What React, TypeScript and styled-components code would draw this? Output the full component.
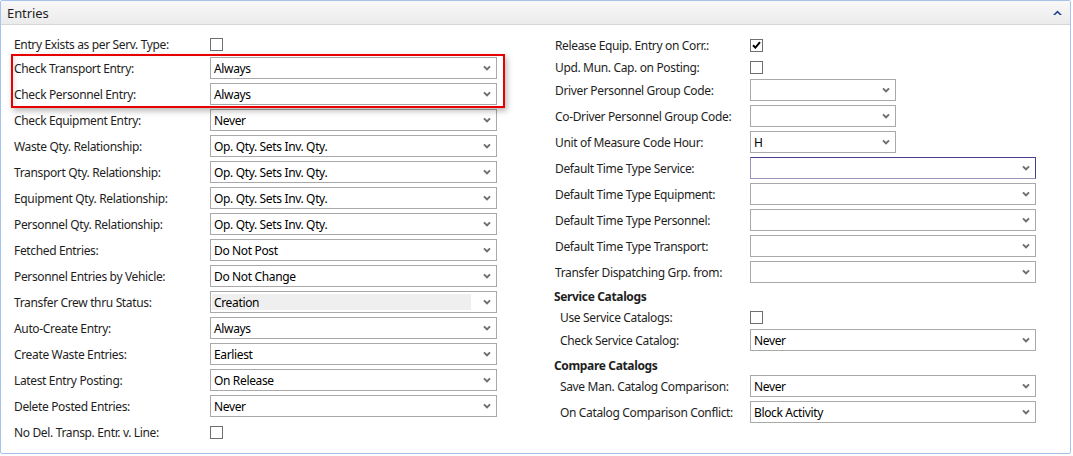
import React from 'react';
import styled, { createGlobalStyle } from 'styled-components';

const Global = createGlobalStyle`
  html, body { margin: 0; padding: 0; background: #ffffff; }
  body { font-family: "Segoe UI", "Noto Sans", "Open Sans", sans-serif; color: #1e1e1e; }
  * { box-sizing: border-box; }
`;

const Panel = styled.section`
  width: 1071px;
  height: 454px;
  border: 1px solid #a8c3ea;
  border-radius: 2px;
  display: flex;
  flex-direction: column;
  background: #fff;
`;

const Header = styled.header`
  height: 24px;
  flex: none;
  border-bottom: 1px solid #d6d6d6;
  background: linear-gradient(#f8f8f8, #ebebeb);
  display: flex;
  align-items: center;
  justify-content: space-between;
  padding: 0 8px 0 6px;
`;

const Title = styled.h2`
  margin: 0;
  font-size: 13px;
  font-weight: 400;
  color: #1e1e1e;
  letter-spacing: -0.1px;
`;

const CollapseBtn = styled.span`
  display: flex;
  width: 9px;
  height: 6px;
  color: #1f3e8e;
`;

const Body = styled.div`
  flex: 1;
  display: grid;
  grid-template-columns: 541px 1fr;
`;

const Column = styled.div<{ $top: number }>`
  padding: ${(p) => p.$top}px 0 0 13px;
  display: flex;
  flex-direction: column;
`;

const Row = styled.div<{ $h: number; $indent?: number }>`
  height: ${(p) => p.$h}px;
  display: flex;
  align-items: center;
  padding-left: ${(p) => p.$indent || 0}px;
`;

const Label = styled.span<{ $w: number }>`
  width: ${(p) => p.$w}px;
  flex: none;
  font-size: 12px;
  letter-spacing: -0.35px;
  white-space: nowrap;
  color: #1e1e1e;
`;

const SectionTitle = styled.div<{ $h: number; $pt?: number }>`
  height: ${(p) => p.$h}px;
  padding-top: ${(p) => p.$pt || 0}px;
  display: flex;
  align-items: center;
  font-size: 12px;
  letter-spacing: -0.35px;
  font-weight: 700;
  color: #1e1e1e;
  margin-left: -1px;
`;

const Box = styled.span`
  width: 13px;
  height: 13px;
  border: 1px solid #6f6f6f;
  background: #fff;
  display: flex;
  align-items: center;
  justify-content: center;
`;

const Combo = styled.div<{ $w: number; $focus?: boolean }>`
  width: ${(p) => p.$w}px;
  height: 22px;
  border: 1px solid #a9a9a9;
  border-color: ${(p) => (p.$focus ? '#4b3d8c #4b3d8c #9893bd #9893bd' : '#a9a9a9')};
  background: #fff;
  display: flex;
  align-items: center;
  padding: 0 5px 0 1px;
`;

const Value = styled.span<{ $shaded?: boolean }>`
  flex: 1;
  height: 16px;
  margin-right: 12px;
  padding-left: 2px;
  display: flex;
  align-items: center;
  font-size: 12px;
  letter-spacing: -0.35px;
  color: #000;
  background: ${(p) => (p.$shaded ? '#efefef' : 'transparent')};
  white-space: nowrap;
`;

const Chevron = styled.svg`
  width: 8px;
  height: 6px;
  flex: none;
`;

const Highlight = styled.div`
  position: relative;
  display: flex;
  flex-direction: column;
  &::after {
    content: '';
    position: absolute;
    top: -1px;
    bottom: -1px;
    left: -3px;
    right: 37px;
    border: 2px solid #e60000;
    box-shadow: 2px 3px 6px rgba(0, 0, 0, 0.28), inset 4px 0 6px -3px rgba(0, 0, 0, 0.12);
    pointer-events: none;
  }
`;

const Check = ({ checked }: { checked?: boolean }) => (
  <Box>
    {checked && (
      <svg width="9" height="8" viewBox="0 0 9 8">
        <path d="M1 4.2 L3.4 6.6 L8 1.2" fill="none" stroke="#000" strokeWidth="2" />
      </svg>
    )}
  </Box>
);

const Select = ({ value = '', w, focus, shaded }: { value?: string; w: number; focus?: boolean; shaded?: boolean }) => (
  <Combo $w={w} $focus={focus}>
    <Value $shaded={shaded}>{value}</Value>
    <Chevron viewBox="0 0 8 6">
      <path d="M1 1.4 L4 4.4 L7 1.4" fill="none" stroke="#6e6e6e" strokeWidth="2" />
    </Chevron>
  </Combo>
);

type Field =
  | { kind: 'check'; label: string; checked?: boolean; h: number }
  | { kind: 'select'; label: string; value?: string; w: number; focus?: boolean; shaded?: boolean };

const FieldRow = ({ f, labelW, indent }: { f: Field; labelW: number; indent?: number }) =>
  f.kind === 'check' ? (
    <Row $h={f.h} $indent={indent}>
      <Label $w={labelW}>{f.label}</Label>
      <Check checked={f.checked} />
    </Row>
  ) : (
    <Row $h={26} $indent={indent}>
      <Label $w={labelW}>{f.label}</Label>
      <Select value={f.value} w={f.w} focus={f.focus} shaded={f.shaded} />
    </Row>
  );

const L = 287;
const leftRest: Field[] = [
  { kind: 'select', label: 'Check Equipment Entry:', value: 'Never', w: L },
  { kind: 'select', label: 'Waste Qty. Relationship:', value: 'Op. Qty. Sets Inv. Qty.', w: L },
  { kind: 'select', label: 'Transport Qty. Relationship:', value: 'Op. Qty. Sets Inv. Qty.', w: L },
  { kind: 'select', label: 'Equipment Qty. Relationship:', value: 'Op. Qty. Sets Inv. Qty.', w: L },
  { kind: 'select', label: 'Personnel Qty. Relationship:', value: 'Op. Qty. Sets Inv. Qty.', w: L },
  { kind: 'select', label: 'Fetched Entries:', value: 'Do Not Post', w: L },
  { kind: 'select', label: 'Personnel Entries by Vehicle:', value: 'Do Not Change', w: L },
  { kind: 'select', label: 'Transfer Crew thru Status:', value: 'Creation', w: L, shaded: true },
  { kind: 'select', label: 'Auto-Create Entry:', value: 'Always', w: L },
  { kind: 'select', label: 'Create Waste Entries:', value: 'Earliest', w: L },
  { kind: 'select', label: 'Latest Entry Posting:', value: 'On Release', w: L },
  { kind: 'select', label: 'Delete Posted Entries:', value: 'Never', w: L },
  { kind: 'check', label: 'No Del. Transp. Entr. v. Line:', h: 26 },
];

const S = 146;
const W = 286;
const rightTop: Field[] = [
  { kind: 'check', label: 'Release Equip. Entry on Corr.:', checked: true, h: 24 },
  { kind: 'check', label: 'Upd. Mun. Cap. on Posting:', h: 20 },
  { kind: 'select', label: 'Driver Personnel Group Code:', w: S },
  { kind: 'select', label: 'Co-Driver Personnel Group Code:', w: S },
  { kind: 'select', label: 'Unit of Measure Code Hour:', value: 'H', w: S },
  { kind: 'select', label: 'Default Time Type Service:', w: W, focus: true },
  { kind: 'select', label: 'Default Time Type Equipment:', w: W },
  { kind: 'select', label: 'Default Time Type Personnel:', w: W },
  { kind: 'select', label: 'Default Time Type Transport:', w: W },
  { kind: 'select', label: 'Transfer Dispatching Grp. from:', w: W },
];

const service: Field[] = [
  { kind: 'check', label: 'Use Service Catalogs:', h: 20 },
  { kind: 'select', label: 'Check Service Catalog:', value: 'Never', w: W },
];

const compare: Field[] = [
  { kind: 'select', label: 'Save Man. Catalog Comparison:', value: 'Never', w: W },
  { kind: 'select', label: 'On Catalog Comparison Conflict:', value: 'Block Activity', w: W },
];

export default function App() {
  return (
    <>
      <Global />
      <Panel>
        <Header>
          <Title>Entries</Title>
          <CollapseBtn>
            <svg width="9" height="6" viewBox="0 0 9 6">
              <path d="M0 5 L4.5 0.5 L9 5 L6.8 5 L4.5 2.7 L2.2 5 Z" fill="currentColor" />
            </svg>
          </CollapseBtn>
        </Header>
        <Body>
          <Column $top={8}>
            <FieldRow f={{ kind: 'check', label: 'Entry Exists as per Serv. Type:', h: 22 }} labelW={196} />
            <Highlight>
              <FieldRow f={{ kind: 'select', label: 'Check Transport Entry:', value: 'Always', w: L }} labelW={196} />
              <FieldRow f={{ kind: 'select', label: 'Check Personnel Entry:', value: 'Always', w: L }} labelW={196} />
            </Highlight>
            {leftRest.map((f) => (
              <FieldRow key={f.label} f={f} labelW={196} />
            ))}
          </Column>
          <Column $top={8}>
            {rightTop.map((f) => (
              <FieldRow key={f.label} f={f} labelW={195} />
            ))}
            <SectionTitle $h={22}>Service Catalogs</SectionTitle>
            {service.map((f) => (
              <FieldRow key={f.label} f={f} labelW={190} indent={5} />
            ))}
            <SectionTitle $h={20} $pt={4}>Compare Catalogs</SectionTitle>
            {compare.map((f) => (
              <FieldRow key={f.label} f={f} labelW={190} indent={5} />
            ))}
          </Column>
        </Body>
      </Panel>
    </>
  );
}
